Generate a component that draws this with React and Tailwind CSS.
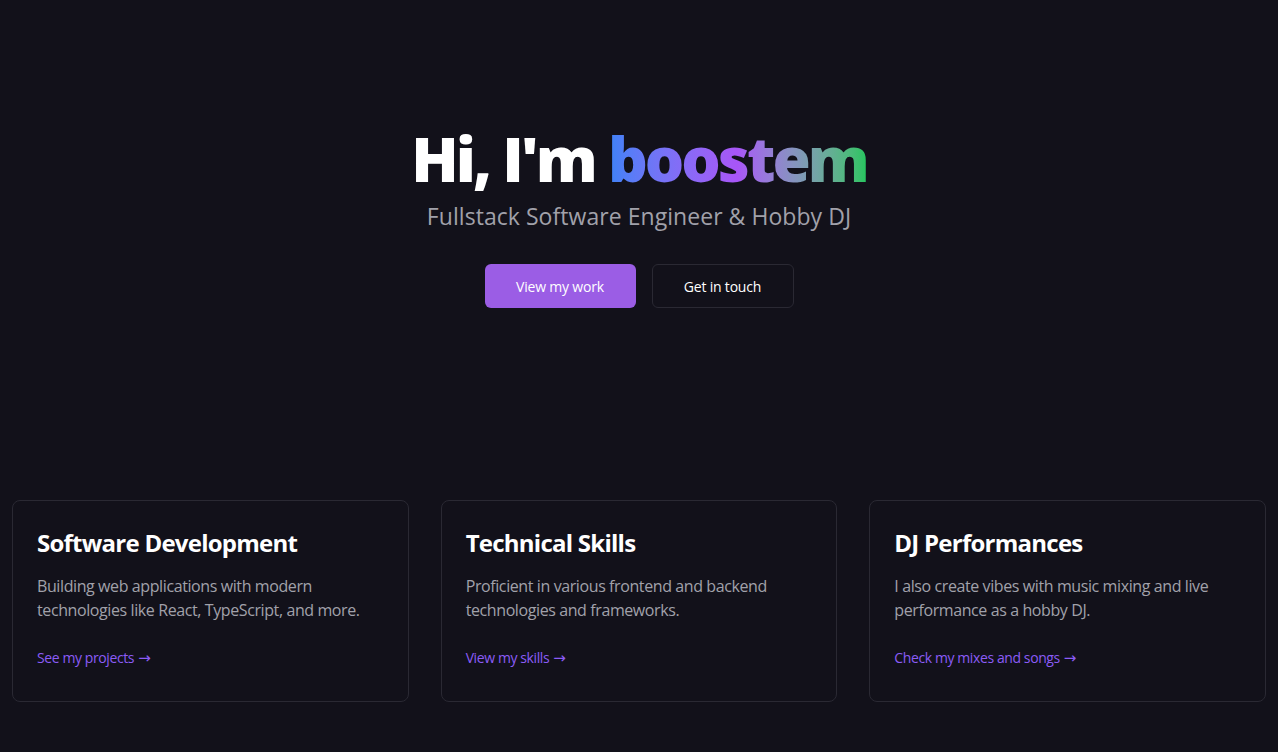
import React from "react";

const cards = [
  {
    title: "Software Development",
    lines: ["Building web applications with modern", "technologies like React, TypeScript, and more."],
    link: "See my projects",
  },
  {
    title: "Technical Skills",
    lines: ["Proficient in various frontend and backend", "technologies and frameworks."],
    link: "View my skills",
  },
  {
    title: "DJ Performances",
    lines: ["I also create vibes with music mixing and live", "performance as a hobby DJ."],
    link: "Check my mixes and songs",
  },
];

export default function App() {
  return (
    <div
      className="min-h-[752px] w-full bg-[#12111a] text-white"
      style={{ fontFamily: '"Open Sans", "Noto Sans", sans-serif' }}
    >
      <section className="flex flex-col items-center pt-[118px]">
        <h1 className="text-[62px] font-extrabold leading-[80px] tracking-[-3px]">
          Hi, I'm{" "}
          <span className="bg-gradient-to-r from-[#3b82f6] via-[#a855f7] to-[#22c55e] bg-clip-text text-transparent">
            boostem
          </span>
        </h1>
        <p className="mt-[2px] text-[23px] leading-[32px] tracking-[0.05px] text-[#a1a1aa]">
          Fullstack Software Engineer &amp; Hobby DJ
        </p>
        <div className="mt-[32px] flex gap-4">
          <button className="flex h-[44px] w-[151px] items-center justify-center rounded-md bg-[#9b5de5] text-[14px] tracking-[-0.2px] text-white">
            View my work
          </button>
          <button className="flex h-[44px] w-[142px] items-center justify-center rounded-md border border-[#2a2933] bg-[#12111a] text-[14px] tracking-[-0.2px] text-white">
            Get in touch
          </button>
        </div>
      </section>
      <section className="mt-[192px] grid grid-cols-3 gap-8 px-3">
        {cards.map((c) => (
          <div key={c.title} className="h-[202px] rounded-lg border border-[#2a2933] bg-[#12111a] px-6 pt-[26px]">
            <h3 className="text-[24px] font-bold leading-[32px] tracking-[-0.75px]">{c.title}</h3>
            <p className="mt-[15px] text-[16px] leading-[24px] tracking-[-0.4px] text-[#a1a1aa]">
              {c.lines[0]}
              <br />
              {c.lines[1]}
            </p>
            <a className="mt-[26px] flex items-center gap-[4px] text-[14px] leading-[20px] tracking-[-0.4px] text-[#8b5cf6]">
              <span>{c.link}</span>
              <span className="text-[15px] leading-[20px]" style={{ fontFamily: '"DejaVu Sans", sans-serif' }}>→</span>
            </a>
          </div>
        ))}
      </section>
    </div>
  );
}
